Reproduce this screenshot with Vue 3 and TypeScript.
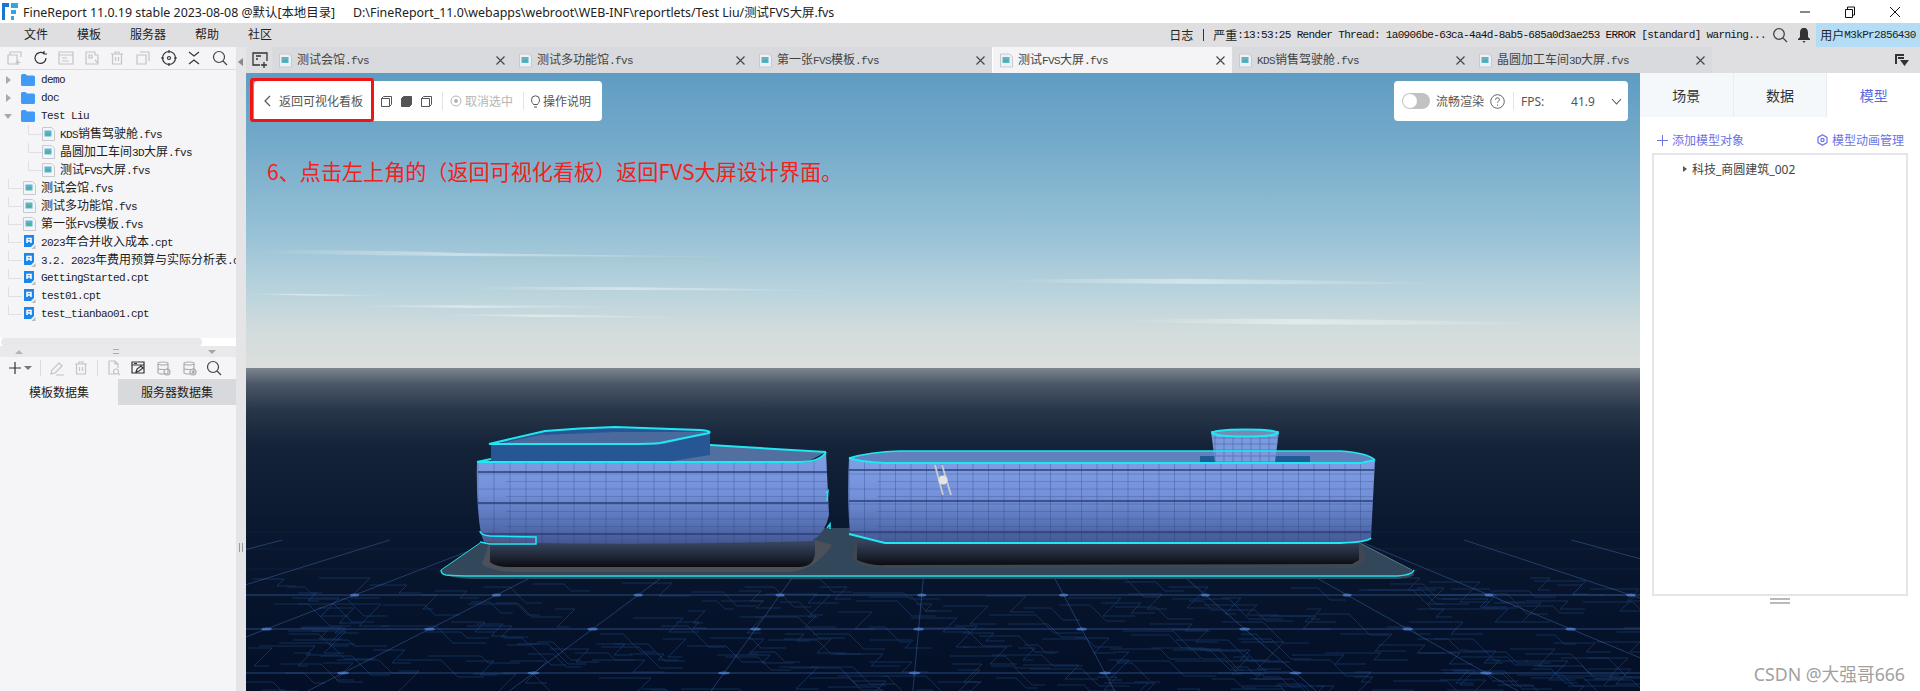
<template>
  <div class="app">
    <header class="titlebar">
      <svg class="logo" width="16" height="17" viewBox="0 0 16 17">
        <path d="M0 0h7v17H0z" fill="#1677d2" />
        <path d="M9 0h7v5H9zM9 7h5v4H9zM9 13h3v4H9z" fill="#35a3e8" />
        <path d="M3 4h4v13H3z" fill="#fff" />
      </svg>
      <span class="app-title">FineReport 11.0.19 stable 2023-08-08 @默认[本地目录]</span>
      <span class="app-path">D:\FineReport_11.0\webapps\webroot\WEB-INF\reportlets/Test Liu/测试FVS大屏.fvs</span>
      <div class="win-btns">
        <svg width="12" height="12" viewBox="0 0 12 12"><path d="M1 6h10" stroke="#111" /></svg>
        <svg width="12" height="12" viewBox="0 0 12 12" fill="none" stroke="#111"><path d="M1.5 3.5h7v8h-7zM3.5 3.5v-2.500h7v8h-2" /></svg>
        <svg width="12" height="12" viewBox="0 0 12 12"><path d="M1 1l10 10M11 1L1 11" stroke="#111" /></svg>
      </div>
    </header>

    <nav class="menubar">
      <span v-for="m in menus" :key="m" class="menu-item">{{ m }}</span>
      <div class="status">
        <span class="status-cjk">日志</span>
        <i class="status-sep"></i>
        <span class="status-cjk">严重</span>
        <span class="status-log">:13:53:25 Render Thread: 1a0906be-63ca-4a4d-8ab5-685a0d3ae253 ERROR [standard] warning...</span>
        <svg class="status-search" width="16" height="16" viewBox="0 0 16 16" fill="none" stroke="#444" stroke-width="1.3"><circle cx="7" cy="7" r="5.300" /><path d="M11 11l4 4" /></svg>
        <svg class="status-bell" width="12" height="16" viewBox="0 0 12 16"><path d="M6 1c-3 0-4 2-4 5v4l-2 2v1h12v-1l-2-2V6c0-3-1-5-4-5zM4.500 14h3L6 16z" fill="#333" /></svg>
        <span class="user">用户<em>M3kPr2856430</em></span>
      </div>
    </nav>

    <div class="workspace">
      <aside class="left">
        <div class="left-main">
          <div class="tools">
            <svg v-for="(ic, i) in topTools" :key="i" width="16" height="16" viewBox="0 0 16 16" fill="none" :stroke="ic.color" stroke-width="1.200">
              <path :d="ic.d" />
            </svg>
          </div>

          <div class="tree">
            <div v-for="row in treeRows" :key="row.name" class="row" :class="[row.kind, { nested: row.depth === 1, last: row.last }]">
              <i v-if="row.kind === 'folder'" class="arrow" :class="{ open: row.open }"></i>
              <svg v-if="row.kind === 'folder'" class="ico" width="14" height="12" viewBox="0 0 14 12">
                <path d="M0 1.500Q0 0 1.500 0h3l1.500 1.500h6.500Q14 1.500 14 3v7.500Q14 12 12.500 12h-11Q0 12 0 10.500z" fill="#3f9bf7" />
              </svg>
              <svg v-else-if="row.kind === 'fvs'" class="ico" width="13" height="14" viewBox="0 0 13 14">
                <path d="M.5.500h9l3 3v10H.5z" fill="#f4f5f8" stroke="#c6cad0" />
                <path d="M2.500 3.500h7v6h-7z" fill="#5db4d2" />
                <path d="M3.500 6h5v2.500h-5z" fill="#55b089" />
              </svg>
              <svg v-else class="ico" width="13" height="14" viewBox="0 0 13 14">
                <path d="M1 0h10v9l-3 3H1z" fill="#1b87ea" />
                <path d="M4 8V3.500h4V8M4 6h4" fill="none" stroke="#fff" stroke-width="1.500" />
                <path d="M8.500 14l4-4v4z" fill="#bbb" />
              </svg>
              <span class="name">
                <span v-for="(part, i) in splitRuns(row.name)" :key="i" :class="{ cjk: part.cjk }">{{ part.text }}</span>
              </span>
            </div>
          </div>

          <div class="hscroll"><i></i></div>
          <div class="splitter">
            <i class="up"></i>
            <b></b>
            <i class="down"></i>
          </div>
          <div class="tools ds-tools">
            <template v-for="(ic, i) in dataTools" :key="i">
              <i v-if="ic.cls === 'sep'" class="tool-sep"></i>
              <i v-else-if="ic.cls === 'caret'" class="tool-caret"></i>
              <svg v-else width="16" height="16" viewBox="0 0 16 16" fill="none" :stroke="ic.color" stroke-width="1.200" :class="ic.cls">
                <path :d="ic.d" />
              </svg>
            </template>
          </div>
          <div class="ds-tabs">
            <span class="ds-tab on">模板数据集</span>
            <span class="ds-tab">服务器数据集</span>
          </div>
        </div>
        <div class="left-band">
          <i class="collapse"></i>
          <i class="grip"></i>
        </div>
      </aside>

      <main class="main">
        <div class="tabbar">
          <svg class="new-tab" width="17" height="17" viewBox="0 0 17 17" fill="none" stroke="#333" stroke-width="1.300">
            <path d="M8 13H1V1h14v8M4 4h5M4 7h2M12 10v6M9 13h6" />
          </svg>
          <div v-for="t in tabs" :key="t" class="tab" :class="{ active: t === activeTab }">
            <svg width="13" height="15" viewBox="0 0 13 14">
              <path d="M.5.500h9l3 3v10H.5z" fill="#eef0f4" stroke="#c6cad0" />
              <path d="M2.500 3.500h7v6h-7z" fill="#5db4d2" />
              <path d="M3.500 6h5v2.500h-5z" fill="#55b089" />
            </svg>
            <span class="tab-name">
              <span v-for="(part, i) in splitRuns(t)" :key="i" :class="{ cjk: part.cjk }">{{ part.text }}</span>
            </span>
            <svg class="tab-x" width="9" height="9" viewBox="0 0 9 9"><path d="M.5.500l8 8M8.500.500l-8 8" stroke="#444" stroke-width="1.100" /></svg>
          </div>
          <svg class="tab-menu" width="14" height="13" viewBox="0 0 14 13"><path d="M0 0h9v2H2v8H0z" fill="#333" /><path d="M3 3h6v2H3zM5 6h9l-4.500 6z" fill="#333" /></svg>
        </div>

        <div class="content">
          <section class="scene">
            <svg class="scene-art" width="1394" height="618" viewBox="246 73 1394 618">
              <defs>
                <linearGradient id="sky" x1="0" y1="0" x2="0" y2="1">
                  <stop offset="0" stop-color="#5f9cc3" />
                  <stop offset=".22" stop-color="#72a9c9" />
                  <stop offset=".55" stop-color="#98c2d6" />
                  <stop offset=".76" stop-color="#bdd5dd" />
                  <stop offset=".88" stop-color="#d3dcdc" />
                  <stop offset="1" stop-color="#dcdedc" />
                </linearGradient>
                <linearGradient id="floor" x1="0" y1="0" x2="0" y2="1">
                  <stop offset="0" stop-color="#7d868f" />
                  <stop offset=".05" stop-color="#4b5767" />
                  <stop offset=".13" stop-color="#28364a" />
                  <stop offset=".24" stop-color="#142338" />
                  <stop offset=".5" stop-color="#0a182f" />
                  <stop offset="1" stop-color="#020f26" />
                </linearGradient>
                <linearGradient id="facade" x1="0" y1="0" x2="0" y2="1">
                  <stop offset="0" stop-color="#7f9fe4" />
                  <stop offset=".45" stop-color="#7390d8" />
                  <stop offset=".8" stop-color="#556fb2" />
                  <stop offset="1" stop-color="#445791" />
                </linearGradient>
                <linearGradient id="base" x1="0" y1="0" x2="0" y2="1">
                  <stop offset="0" stop-color="#3a4a68" />
                  <stop offset=".55" stop-color="#232a3a" />
                  <stop offset="1" stop-color="#0b0c12" />
                </linearGradient>
                <linearGradient id="streak" x1="0" y1="0" x2="1" y2="0">
                  <stop offset="0" stop-color="#fff" stop-opacity="0" />
                  <stop offset=".4" stop-color="#fff" stop-opacity=".42" />
                  <stop offset="1" stop-color="#fff" stop-opacity="0" />
                </linearGradient>
                <clipPath id="bodyA"><path :d="bodyA" /></clipPath>
                <clipPath id="bodyB"><path :d="bodyB" /></clipPath>
                <clipPath id="chimney"><path d="M1211 431L1215 462H1275L1279 431Z" /></clipPath>
              </defs>

              <rect x="246" y="73" width="1394" height="296" fill="url(#sky)" />
              <rect x="246" y="368" width="1394" height="323" fill="url(#floor)" />

              <path v-for="(c, i) in clouds" :key="'c' + i" :d="c" fill="url(#streak)" />

              <path v-for="(t, i) in traces" :key="'t' + i" :d="t" fill="none" stroke="#1a3a6b" stroke-width="1" opacity=".7" />
              <path v-for="(l, i) in floorLines" :key="'f' + i" :d="l.d" fill="none" stroke="#4e7ed0" :stroke-width="l.w" :opacity="l.o" />
              <ellipse v-for="(n, i) in floorNodes" :key="'n' + i" :cx="n.x" :cy="n.y" :rx="n.r" ry="1.500" fill="#5b8fe6" opacity=".65" />

              <!-- platform -->
              <path d="M441 570Q441 572 444 574Q452 578 470 579H1395Q1414 578 1414 574L1412 570L1360 543L1330 528H830L700 528L480 543Z" fill="#33475b" />
              <path d="M441 570Q441 574 446 575Q456 576 475 576H1392Q1412 576 1414 570" fill="none" stroke="#22dbe6" stroke-width="1.500" />
              <path d="M441 570L480 543" stroke="#22dbe6" stroke-width="1" />
              <path d="M1360 543L1412 570" stroke="#7fa4b0" stroke-width="1" opacity=".6" />
              <path d="M482 564Q490 571 515 572H790Q815 570 832 545L815 540H490Z" fill="#4c5159" />
              <path d="M852 560Q860 567 885 568H1350Q1362 566 1366 558L1359 540H857Z" fill="#3f4851" />

              <!-- left building -->
              <path d="M490 543V562Q495 567 510 567H800Q815 566 815 552V540Z" fill="url(#base)" />
              <path d="M478 462L700 444L826 452L805 463H490Z" fill="#51709f" />
              <path d="M710 445L826 452" stroke="#21e6f1" stroke-width="2" />
              <path :d="bodyA" fill="url(#facade)" />
              <g clip-path="url(#bodyA)">
                <path v-for="(g, i) in gridA" :key="'a' + i" :d="g.d" :stroke="g.c" :stroke-width="g.w" fill="none" />
              </g>
              <path d="M491 445L545 431L615 427L705 430L710 433V455L660 463H491Z" fill="#265694" />
              <path d="M493 445H650Q665 445 680 440L707 432L615 432L540 435Z" fill="#4a6a9e" />
              <path d="M489 444L545 431Q580 428 615 427L700 430Q712 431 709 433L660 443Q650 444 630 444H495Z" fill="none" stroke="#20e8f3" stroke-width="2" />
              <path d="M477 462H800Q820 462 826 452" fill="none" stroke="#20e8f3" stroke-width="2" />
              <path d="M477 462L491 459" stroke="#20e8f3" stroke-width="2" />
              <path d="M480 531Q480 535 490 536L536 537V544H490L480 542" fill="none" stroke="#20e8f3" stroke-width="1.500" />
              <path d="M826 493L828 491L827 501M827 528L830 524L830 529" fill="none" stroke="#20e8f3" stroke-width="1.500" />

              <!-- right building -->
              <path d="M857 540V560Q870 566 885 565L1352 564L1359 560V538Z" fill="url(#base)" />
              <path d="M849 458Q870 452 900 451L1340 451Q1368 453 1375 460L1360 462H885Q860 462 849 458Z" fill="#6181bd" />
              <path d="M1200 456h110v6h-110z" fill="#1f5b96" />
              <path :d="bodyB" fill="url(#facade)" />
              <g clip-path="url(#bodyB)">
                <path v-for="(g, i) in gridB" :key="'b' + i" :d="g.d" :stroke="g.c" :stroke-width="g.w" fill="none" />
              </g>
              <path d="M1211 431L1215 462H1275L1279 431Z" fill="#7b9ae0" />
              <g clip-path="url(#chimney)">
                <path v-for="(g, i) in gridC" :key="'c2' + i" :d="g" stroke="#4d659e" stroke-width=".6" fill="none" />
              </g>
              <ellipse cx="1245" cy="433" rx="33" ry="3.500" fill="#748bb5" stroke="#20e8f3" stroke-width="2" />
              <path d="M849 458Q870 452 900 451L1340 451Q1368 453 1375 460" fill="none" stroke="#20e8f3" stroke-width="1.600" />
              <path d="M849 458Q860 462 885 463H1360L1375 460" fill="none" stroke="#20e8f3" stroke-width="2" />
              <path d="M849 534L885 543H1340Q1368 542 1371 538" fill="none" stroke="#20e8f3" stroke-width="2" />

              <!-- drone -->
              <path d="M935 465L943 495M942 465L951 495" fill="none" stroke="#c9cbd0" stroke-width="1.800" />
              <circle cx="943" cy="480" r="4.500" fill="#e4e4e4" />
            </svg>

            <div class="card card-left">
              <button class="back">
                <svg width="7" height="12" viewBox="0 0 7 12"><path d="M6 1L1 6l5 5" fill="none" stroke="#555" stroke-width="1.200" /></svg>
                返回可视化看板
              </button>
              <div class="cubes">
                <svg v-for="n in 3" :key="n" width="11" height="11" viewBox="0 0 11 11" fill="none" stroke="#555">
                  <path d="M.5 2.500h8v8h-8zM.5 2.500l2-2h8v8l-2 2" :fill="n === 2 ? '#555' : 'none'" />
                </svg>
              </div>
              <i class="card-sep"></i>
              <span class="card-muted">
                <svg width="12" height="12" viewBox="0 0 12 12" fill="none" stroke="#b5b5b5"><circle cx="6" cy="6" r="5" /><circle cx="6" cy="6" r="1.500" fill="#b5b5b5" /></svg>
                取消选中
              </span>
              <i class="card-sep"></i>
              <span class="card-text">
                <svg width="9" height="13" viewBox="0 0 9 13" fill="none" stroke="#555"><path d="M2.500 9.500C1.500 8 .5 7 .5 4.800a4 4 0 018 0c0 2.200-1 3.200-2 4.700zM3 12h3" /></svg>
                操作说明
              </span>
            </div>

            <div class="highlight"></div>

            <p class="note">6、点击左上角的（返回可视化看板）返回FVS大屏设计界面。</p>

            <div class="card card-right">
              <i class="toggle"></i>
              <span class="card-text">流畅渲染</span>
              <svg class="help" width="15" height="15" viewBox="0 0 15 15" fill="none" stroke="#666">
                <circle cx="7.500" cy="7.500" r="6.800" />
                <path d="M5.500 5.800a2 2 0 114 0c0 1.200-2 1.400-2 3M7.500 10.500v1.200" />
              </svg>
              <i class="card-sep"></i>
              <span class="fps-label">FPS:</span>
              <span class="fps-value">41.9</span>
              <svg class="fps-more" width="11" height="7" viewBox="0 0 11 7"><path d="M1 1l4.500 5L10 1" fill="none" stroke="#555" stroke-width="1.100" /></svg>
            </div>
          </section>

          <aside class="side">
            <div class="side-tabs">
              <span v-for="s in sideTabs" :key="s" class="side-tab" :class="{ on: s === '模型' }">{{ s }}</span>
            </div>
            <div class="side-actions">
              <span class="action">
                <svg width="11" height="11" viewBox="0 0 11 11"><path d="M5.500 0v11M0 5.500h11" stroke="#6a74e6" /></svg>
                添加模型对象
              </span>
              <span class="action">
                <svg width="11" height="12" viewBox="0 0 11 12" fill="none" stroke="#6a74e6" stroke-width="1.200"><path d="M5.500.8l4.500 2.600v5.200l-4.500 2.600L1 8.600V3.400z" /><circle cx="5.500" cy="6" r="1.600" /></svg>
                模型动画管理
              </span>
            </div>
            <div class="model-box">
              <div class="model-row"><i></i>科技_商圆建筑_002</div>
            </div>
            <div class="box-grip"></div>
            <div class="watermark">CSDN @大强哥666</div>
          </aside>
        </div>
      </main>
    </div>
  </div>
</template>

<script setup lang="ts">
interface TreeRow {
  name: string
  kind: 'folder' | 'fvs' | 'cpt'
  depth: number
  open?: boolean
  last?: boolean
}

const menus = ['文件', '模板', '服务器', '帮助', '社区']
const tabs = ['测试会馆.fvs', '测试多功能馆.fvs', '第一张FVS模板.fvs', '测试FVS大屏.fvs', 'KDS销售驾驶舱.fvs', '晶圆加工车间3D大屏.fvs']
const activeTab = '测试FVS大屏.fvs'
const sideTabs = ['场景', '数据', '模型']

const treeRows: TreeRow[] = [
  { name: 'demo', kind: 'folder', depth: 0 },
  { name: 'doc', kind: 'folder', depth: 0 },
  { name: 'Test Liu', kind: 'folder', depth: 0, open: true },
  { name: 'KDS销售驾驶舱.fvs', kind: 'fvs', depth: 1 },
  { name: '晶圆加工车间3D大屏.fvs', kind: 'fvs', depth: 1 },
  { name: '测试FVS大屏.fvs', kind: 'fvs', depth: 1, last: true },
  { name: '测试会馆.fvs', kind: 'fvs', depth: 0 },
  { name: '测试多功能馆.fvs', kind: 'fvs', depth: 0 },
  { name: '第一张FVS模板.fvs', kind: 'fvs', depth: 0 },
  { name: '2023年合并收入成本.cpt', kind: 'cpt', depth: 0 },
  { name: '3.2. 2023年费用预算与实际分析表.cpt', kind: 'cpt', depth: 0 },
  { name: 'GettingStarted.cpt', kind: 'cpt', depth: 0 },
  { name: 'test01.cpt', kind: 'cpt', depth: 0 },
  { name: 'test_tianbao01.cpt', kind: 'cpt', depth: 0, last: true },
]

const off = '#c3c4c8'
const dark = '#333'
const topTools = [
  { d: 'M14 7V2H3v3M1 5h9v9H1zM11 10v5M8.500 12.500h5', color: off },
  { d: 'M13 8a5.500 5.500 0 11-2-4.300M11 1v3H14', color: dark },
  { d: 'M1 2h14v12H1zM1 5h14M4 8h5M4 11h7', color: off },
  { d: 'M2 2h9v3h3v9H2zM5 5h3v3H5zM11 10l3 3', color: off },
  { d: 'M2 4h12M6 4V2h4v2M3.500 4v10h9V4M6.500 7v4M9.500 7v4', color: off },
  { d: 'M5 2h9v9M2 5h9v9H2z', color: off },
  { d: 'M8 1.500a6.500 6.500 0 100 13 6.500 6.500 0 000-13zM8 0v3M8 13v3M0 8h3M13 8h3M8 6.500a1.500 1.500 0 100 3 1.500 1.500 0 000-3z', color: dark },
  { d: 'M3 2l5 4 5-4M3 14l5-4 5 4', color: dark },
  { d: 'M7 1.500a5.500 5.500 0 100 11 5.500 5.500 0 000-11zM11 11l4 4', color: '#444' },
]

const dataTools = [
  { d: 'M8 2v12M2 8h12', color: dark, cls: '' },
  { d: '', color: '', cls: 'caret' },
  { d: '', color: '', cls: 'sep' },
  { d: 'M10 3l3 3-7 7-4 1 1-4zM7 15h8', color: off, cls: '' },
  { d: 'M2 4h12M6 4V2h4v2M3.500 4v10h9V4M6.500 7v4M9.500 7v4', color: off, cls: '' },
  { d: '', color: '', cls: 'sep' },
  { d: 'M10 14H3V1h6l3 3v4M9 1v3h3M10 9a2.500 2.500 0 100 5 2.500 2.500 0 000-5zM12 13l2 2', color: off, cls: '' },
  { d: 'M2 2h12v11H2zM2 5h12M4 3.500h3M6 12l1-3 4-3 2 2-4 3z', color: dark, cls: '' },
  { d: 'M2 3.500c0-2 10-2 10 0v9c0 2-10 2-10 0zM2 3.500c0 2 10 2 10 0M2 8c0 2 10 2 10 0M11 9a3 3 0 100 6 3 3 0 000-6z', color: '#aaa', cls: 'wide' },
  { d: 'M2 3.500c0-2 10-2 10 0v9c0 2-10 2-10 0zM2 3.500c0 2 10 2 10 0M2 8c0 2 10 2 10 0M11 9a3 3 0 100 6 3 3 0 000-6zM10 11l2 2M12 11l-2 2', color: '#aaa', cls: 'wide' },
  { d: 'M7 1.500a5.500 5.500 0 100 11 5.500 5.500 0 000-11zM11 11l4 4', color: '#444', cls: '' },
]

const splitRuns = (text: string) =>
  (text.match(/[\u4e00-\u9fff]+|[^\u4e00-\u9fff]+/g) ?? []).map((t) => ({
    text: t,
    cjk: /[\u4e00-\u9fff]/.test(t),
  }))

const bodyA = 'M477 462Q476 505 481 534L484 542Q650 546 812 541Q826 532 829 515L826 452Q822 462 800 463H490Z'
const bodyB = 'M849 458Q860 462 885 463H1360L1375 460L1371 538Q1368 542 1340 543H885L850 534Q847 500 849 458Z'

const range = (from: number, to: number, step: number) => {
  const out: number[] = []
  for (let v = from; v <= to; v += step) out.push(v)
  return out
}

// facade grids: columns, floor lines and the three dark bands
const facade = (x0: number, x1: number, bands: number[], step: number) => {
  const lines: { d: string; c: string; w: number }[] = []
  range(x0, x1, step).forEach((x) => lines.push({ d: `M${x} 455V545`, c: 'rgba(38,60,115,.3)', w: 1 }))
  range(474, 534, 7.5).forEach((y, i) => {
    const seg = i % 2 ? 28 : 0
    lines.push({ d: `M${x0 + seg} ${y}H${x1}`, c: 'rgba(38,60,115,.24)', w: 1 })
  })
  bands.forEach((y) => lines.push({ d: `M${x0} ${y}H${x1}`, c: '#2b3f78', w: 1.400 }))
  return lines
}
const gridA = facade(478, 830, [472, 503, 534], 16)
const gridB = facade(849, 1375, [470, 501, 532], 15.500)
const gridC = [
  ...range(1215, 1279, 9).map((x) => `M${x} 431V462`),
  ...range(438, 462, 6).map((y) => `M1211 ${y}H1279`),
]

const clouds = [
  'M250 251Q340 249 460 253Q600 255 760 257L460 256Q340 255 250 253Z',
  'M470 287Q620 286 860 291L620 290Q520 290 470 289Z',
  'M240 294Q330 293 390 296L320 296Z',
  'M340 306Q470 304 640 307L470 308Z',
  'M430 315Q560 313 700 318L540 317Z',
  'M1000 280Q1180 276 1460 284Q1220 285 1000 282Z',
  'M1120 320Q1300 316 1560 324Q1300 326 1120 322Z',
]

// perspective floor, everything runs to the point on the horizon
const vp = { x: 943, y: 368 }
const rows = [532, 549, 569, 595, 629, 673]
const columns = range(-1181, 3000, 190.500)

const floorLines = [
  ...rows.map((y) => ({ d: `M246 ${y}H1640`, w: y > 590 ? 1 : 0.7, o: y > 590 ? 0.5 : 0.14 })),
  ...columns.map((x) => {
    const k = (691 - vp.y) / (673 - vp.y)
    const xb = vp.x + (x - vp.x) * k
    const ys = 540
    const xs = vp.x + (x - vp.x) * ((ys - vp.y) / (673 - vp.y))
    return { d: `M${xs} ${ys}L${xb} 691`, w: 1, o: 0.38 }
  }),
]

const floorNodes = rows
  .filter((y) => y > 590)
  .flatMap((y) =>
    columns
      .map((x) => ({ x: vp.x + (x - vp.x) * ((y - vp.y) / (673 - vp.y)), y, r: (y - vp.y) / 50 }))
      .filter((n) => n.x > 246 && n.x < 1640),
  )

// circuit board traces, seeded so the picture stays the same on every load
let seed = 7
const rand = () => {
  seed = (seed * 16807) % 2147483647
  return seed / 2147483647
}
const traces: string[] = []
for (let i = 0; i < 260; i++) {
  const x = 246 + rand() * 1394
  const y = 578 + rand() * 113
  const a = 14 + rand() * 44
  const b = 6 + rand() * 16
  const dir = rand() > 0.5 ? 1 : -1
  traces.push(`M${x.toFixed(0)} ${y.toFixed(0)}h${a.toFixed(0)}l${(dir * b).toFixed(0)} ${b.toFixed(0)}h${(a * 0.6).toFixed(0)}`)
}
</script>

<style>
html,
body {
  margin: 0;
  background: #fff;
}
</style>

<style scoped>
.app {
  width: 1920px;
  height: 691px;
  overflow: hidden;
  display: flex;
  flex-direction: column;
  font-family: "Noto Sans", "Noto Sans CJK SC", sans-serif;
  font-size: 12px;
  color: #222;
}
.titlebar {
  height: 23px;
  flex: none;
  display: flex;
  align-items: center;
  padding-left: 2px;
  background: #fff;
  font-size: 12.400px;
  color: #222;
}
.logo {
  margin-right: 5px;
}
.app-title {
  white-space: nowrap;
  width: 330px;
}
.app-path {
  white-space: nowrap;
}
.win-btns {
  margin-left: auto;
  display: flex;
  gap: 33px;
  padding-right: 19px;
}
.menubar {
  height: 24px;
  flex: none;
  display: flex;
  align-items: center;
  padding-left: 24px;
  background: #dfdfe1;
}
.menu-item {
  margin-right: 29px;
  white-space: nowrap;
  padding-bottom: 2px;
}
.status {
  margin-left: auto;
  display: flex;
  align-items: center;
  height: 100%;
}
.status-sep {
  width: 1px;
  height: 12px;
  margin: 0 9px 0 10px;
  background: #333;
}
.status-log {
  font-family: "Liberation Mono", monospace;
  font-size: 11px;
  letter-spacing: -0.660px;
  white-space: nowrap;
  color: #111;
}
.status-search {
  margin-left: 6px;
}
.status-bell {
  margin-left: 10px;
}
.user {
  margin-left: 6px;
  width: 104px;
  height: 100%;
  display: flex;
  align-items: center;
  justify-content: center;
  background: #b5dcf5;
}
.user em {
  font: 11px "Liberation Mono", monospace;
  letter-spacing: -0.660px;
}

.workspace {
  flex: 1;
  display: flex;
  min-height: 0;
}

.left {
  width: 246px;
  flex: none;
  display: flex;
  background: #f5f5f7;
}
.left-main {
  width: 236px;
  display: flex;
  flex-direction: column;
}
.left-band {
  flex: 1;
  background: #e5e5e7;
  position: relative;
}
.collapse {
  position: absolute;
  left: 2px;
  top: 11px;
  border: 4px solid transparent;
  border-left: 0;
  border-right: 5px solid #888;
}
.grip {
  position: absolute;
  left: 3px;
  top: 496px;
  width: 2px;
  height: 9px;
  border-left: 1px solid #999;
  border-right: 1px solid #999;
}
.tools {
  height: 22px;
  flex: none;
  display: flex;
  align-items: center;
  gap: 9.600px;
  padding-left: 7px;
  border-bottom: 1px solid #dcdcdf;
}
.tree {
  height: 268px;
  flex: none;
  overflow: hidden;
  padding-top: 1px;
  box-sizing: border-box;
}
.row {
  height: 18px;
  display: flex;
  align-items: center;
  white-space: nowrap;
  overflow: hidden;
  position: relative;
  padding-left: 23px;
  color: #1c1c1c;
}
.row.folder {
  padding-left: 21px;
}
.row.nested {
  padding-left: 42px;
}
.row:not(.folder)::before {
  content: "";
  position: absolute;
  left: 8px;
  top: 0;
  height: 9px;
  width: 13px;
  border-left: 1px solid #dfe0e3;
  border-bottom: 1px solid #dfe0e3;
}
.row.nested::before {
  left: 28px;
}
.ico {
  flex: none;
  margin-right: 5px;
}
.row.folder .ico {
  margin-right: 6px;
}
.arrow {
  position: absolute;
  left: 6px;
  top: 5px;
  border: 4px solid transparent;
  border-right: 0;
  border-left: 5px solid #a9a9ad;
}
.arrow.open {
  left: 4px;
  top: 7px;
  border: 4px solid transparent;
  border-bottom: 0;
  border-top: 5px solid #a9a9ad;
}
.name,
.tab-name {
  font: 11px/18px "Liberation Mono", monospace;
  letter-spacing: -0.600px;
}
.cjk {
  font: 12px/18px "Noto Sans CJK SC", sans-serif;
  letter-spacing: 0;
}
.hscroll {
  height: 8px;
  flex: none;
  padding-left: 1px;
  background: #fff;
}
.hscroll i {
  display: block;
  width: 201px;
  height: 8px;
  border-radius: 4px;
  background: #e8e8ea;
}
.splitter {
  height: 11px;
  flex: none;
  display: flex;
  align-items: center;
  justify-content: space-between;
  padding: 0 20px 0 15px;
  background: #e9e9eb;
}
.splitter b {
  width: 6px;
  height: 3px;
  border-top: 1px solid #aaa;
  border-bottom: 1px solid #aaa;
}
.splitter .up {
  border: 4.500px solid transparent;
  border-top: 0;
  border-bottom: 4px solid #b5b5b8;
}
.splitter .down {
  border: 4.500px solid transparent;
  border-bottom: 0;
  border-top: 4px solid #a5a5a8;
}
.ds-tools {
  gap: 8px;
  height: 22px;
  border-bottom: 0;
}
.tool-caret {
  margin-left: -7px;
  border: 4px solid transparent;
  border-bottom: 0;
  border-top: 4px solid #777;
}
.tool-sep {
  width: 1px;
  height: 16px;
  background: #dcdcdf;
}
.ds-tools .wide {
  margin-left: 2px;
}
.ds-tabs {
  height: 26px;
  flex: none;
  display: flex;
}
.ds-tab {
  flex: 1;
  display: flex;
  align-items: center;
  justify-content: center;
}
.ds-tab:not(.on) {
  background: #d8d9dc;
}

.main {
  flex: 1;
  min-width: 0;
  display: flex;
  flex-direction: column;
}
.tabbar {
  height: 26px;
  flex: none;
  display: flex;
  align-items: center;
  background: #dfdfe1;
  position: relative;
}
.new-tab {
  margin: 0 3px 0 6px;
  flex: none;
}
.tab {
  width: 240px;
  height: 100%;
  flex: none;
  display: flex;
  align-items: center;
  padding-left: 7px;
  box-sizing: border-box;
  background: #d9dadd;
  color: #444;
  position: relative;
}
.tab.active {
  background: #f4f4f7;
  border-left: 1px solid #fff;
}
.tab-name {
  margin-left: 5px;
  white-space: nowrap;
}
.tab-x {
  position: absolute;
  right: 7px;
  top: 9px;
}
.tab-menu {
  position: absolute;
  right: 11px;
  top: 7px;
}

.content {
  flex: 1;
  min-height: 0;
  display: flex;
}
.scene {
  width: 1394px;
  flex: none;
  position: relative;
  overflow: hidden;
  background: #07162c;
}
.scene-art {
  display: block;
}
.card {
  position: absolute;
  top: 8px;
  height: 40px;
  box-sizing: border-box;
  display: flex;
  align-items: center;
  background: #fff;
  border-radius: 4px;
  color: #555;
}
.card-left {
  left: 8px;
  width: 348px;
  padding-left: 10px;
}
.back {
  display: flex;
  align-items: center;
  gap: 8px;
  padding: 0;
  border: 0;
  background: none;
  font: inherit;
  color: #555;
  white-space: nowrap;
}
.cubes {
  display: flex;
  gap: 9px;
  margin-left: 18px;
}
.card-sep {
  width: 1px;
  height: 18px;
  background: #e4e4e4;
  flex: none;
}
.card-left .card-sep {
  margin: 0 7px 0 10px;
}
.card-muted,
.card-text {
  display: flex;
  align-items: center;
  gap: 3px;
  white-space: nowrap;
}
.card-muted {
  color: #b5b5b5;
}
.highlight {
  position: absolute;
  left: 4px;
  top: 5px;
  width: 124px;
  height: 44px;
  box-sizing: border-box;
  border: 3px solid #f01414;
  border-radius: 3px;
}
.note {
  position: absolute;
  left: 21px;
  top: 83px;
  margin: 0;
  font-family: "Noto Sans CJK SC", sans-serif;
  font-size: 21.100px;
  line-height: 30px;
  color: #f5201a;
  white-space: nowrap;
}
.card-right {
  left: 1148px;
  width: 234px;
  padding-left: 8px;
}
.toggle {
  width: 28px;
  height: 16px;
  border-radius: 8px;
  background: #c2c2c2;
  flex: none;
  margin-right: 6px;
  position: relative;
}
.toggle::before {
  content: "";
  position: absolute;
  left: 1px;
  top: 1px;
  width: 14px;
  height: 14px;
  border-radius: 50%;
  background: #fff;
}
.help {
  margin: 0 8px 0 6px;
}
.fps-label {
  margin-left: 7px;
  width: 50px;
}
.fps-value {
  width: 40px;
}
.fps-more {
  flex: none;
}

.side {
  flex: 1;
  min-width: 0;
  background: #fff;
  display: flex;
  flex-direction: column;
  position: relative;
}
.side-tabs {
  height: 44px;
  flex: none;
  display: flex;
}
.side-tab {
  flex: 1;
  display: flex;
  align-items: center;
  justify-content: center;
  font-size: 14px;
  color: #333;
  background: #f5f8fb;
  border-right: 1px solid #e9edf2;
}
.side-tab.on {
  background: #fff;
  border-right: 0;
  color: #5a68e2;
}
.side-actions {
  height: 36px;
  flex: none;
  display: flex;
  align-items: center;
  justify-content: space-between;
  padding: 14px 16px 4px 17px;
  box-sizing: border-box;
  color: #6a74e6;
}
.action {
  display: flex;
  align-items: center;
  gap: 4px;
}
.model-box {
  height: 443px;
  flex: none;
  margin: 0 12px;
  box-sizing: border-box;
  border: 2px solid #e4e6eb;
  padding: 4px 0 0 29px;
  color: #444;
}
.model-row {
  display: flex;
  align-items: center;
  height: 20px;
  gap: 5px;
}
.model-row i {
  border: 3.500px solid transparent;
  border-right: 0;
  border-left: 4px solid #555;
}
.box-grip {
  align-self: center;
  width: 20px;
  height: 6px;
  margin-top: 2px;
  box-sizing: border-box;
  border-top: 2px solid #b9b9b9;
  border-bottom: 2px solid #b9b9b9;
}
.watermark {
  position: absolute;
  right: 15px;
  bottom: 5px;
  font-size: 17.700px;
  color: #a0a0a0;
  white-space: nowrap;
}
</style>
